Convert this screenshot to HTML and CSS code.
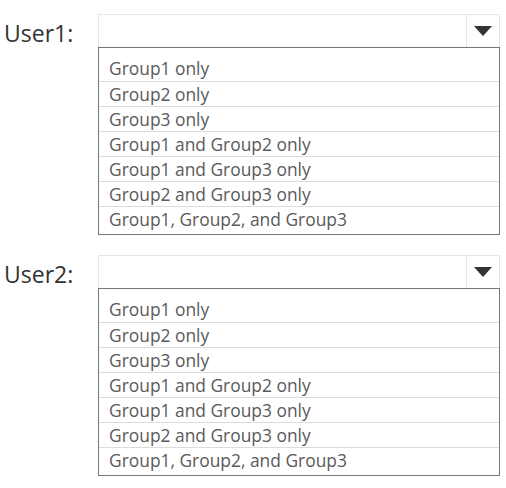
FILE: index.html
```html
<!DOCTYPE html>
<html lang="en">
<head>
    <meta charset="UTF-8">
    <title>Group membership</title>
    <link rel="stylesheet" href="styles.css">
</head>
<body>

<div class="answer">
    <!-- User1 -->
    <div class="pick">
        <div class="user">User1:</div>
        <div class="field">
            <div class="select"><span class="arrow"></span></div>
            <ul class="options">
                <li>Group1 only</li>
                <li>Group2 only</li>
                <li>Group3 only</li>
                <li>Group1 and Group2 only</li>
                <li>Group1 and Group3 only</li>
                <li>Group2 and Group3 only</li>
                <li>Group1, Group2, and Group3</li>
            </ul>
        </div>
    </div>

    <!-- User2 -->
    <div class="pick">
        <div class="user">User2:</div>
        <div class="field">
            <div class="select"><span class="arrow"></span></div>
            <ul class="options">
                <li>Group1 only</li>
                <li>Group2 only</li>
                <li>Group3 only</li>
                <li>Group1 and Group2 only</li>
                <li>Group1 and Group3 only</li>
                <li>Group2 and Group3 only</li>
                <li>Group1, Group2, and Group3</li>
            </ul>
        </div>
    </div>
</div>

</body>
</html>
```
FILE: styles.css
```css
* {
    box-sizing: border-box;
}
body {
    margin: 0;
    background: #fff;
    font-family: "Open Sans", "DejaVu Sans", sans-serif;
}
.answer {
    padding-top: 14px;
}
.pick {
    display: grid;
    grid-template-columns: 98px 402px;
    margin-bottom: 20px;
}
.user {
    padding-left: 4px;
    height: 32px;
    line-height: 38px;
    font-size: 23px;
    color: #333;
}
.select {
    height: 33px;
    border: 1px solid #e6e6e6;
    border-bottom: none;
    display: flex;
    justify-content: flex-end;
}
.arrow {
    width: 33px;
    border-left: 1px solid #e6e6e6;
    display: flex;
    justify-content: center;
    align-items: center;
}
.arrow::after {
    content: "";
    border-left: 9px solid transparent;
    border-right: 9px solid transparent;
    border-top: 10px solid #333;
}
.options {
    list-style: none;
    margin: 0;
    padding: 8px 0 3px;
    border: 1px solid #777;
}
.options li {
    height: 25px;
    line-height: 25px;
    padding-left: 10px;
    font-size: 17.4px;
    color: #5a5a5a;
    border-top: 1px solid #dcdcdc;
}
.options li:first-child {
    border-top: none;
}
```
